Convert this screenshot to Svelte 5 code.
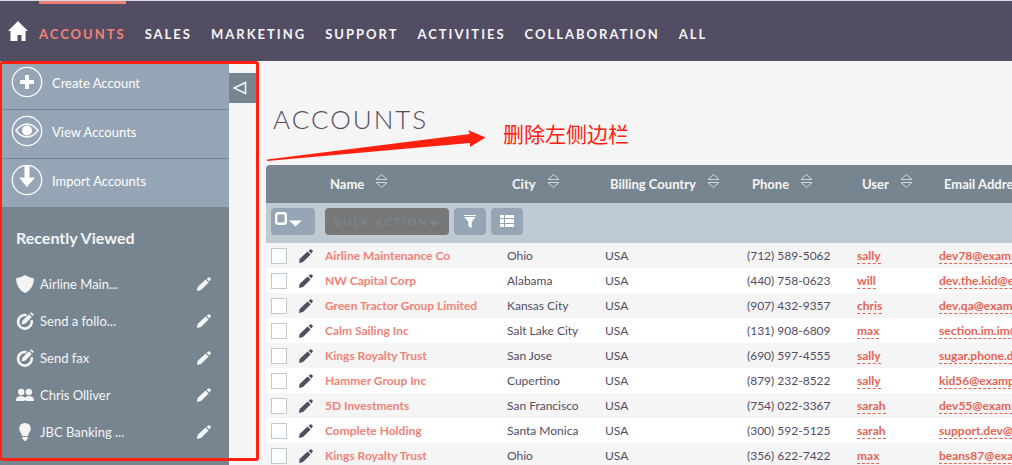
<script lang="ts">
	type Account = {
		name: string;
		city: string;
		phone: string;
		user: string;
		email: string;
	};

	const menu = ['Accounts', 'Sales', 'Marketing', 'Support', 'Activities', 'Collaboration', 'All'];

	const actions = [
		{ label: 'Create Account', icon: 'plus' },
		{ label: 'View Accounts', icon: 'eye' },
		{ label: 'Import Accounts', icon: 'down' }
	];

	const recent = [
		{ label: 'Airline Main...', icon: 'shield' },
		{ label: 'Send a follo...', icon: 'task' },
		{ label: 'Send fax', icon: 'task' },
		{ label: 'Chris Olliver', icon: 'people' },
		{ label: 'JBC Banking ...', icon: 'bulb' }
	];

	const columns = ['Name', 'City', 'Billing Country', 'Phone', 'User', 'Email Address'];

	const accounts: Account[] = [
		{ name: 'Airline Maintenance Co', city: 'Ohio', phone: '(712) 589-5062', user: 'sally', email: 'dev78@example.com' },
		{ name: 'NW Capital Corp', city: 'Alabama', phone: '(440) 758-0623', user: 'will', email: 'dev.the.kid@example.com' },
		{ name: 'Green Tractor Group Limited', city: 'Kansas City', phone: '(907) 432-9357', user: 'chris', email: 'dev.qa@example.com' },
		{ name: 'Calm Sailing Inc', city: 'Salt Lake City', phone: '(131) 908-6809', user: 'max', email: 'section.im.im@example.com' },
		{ name: 'Kings Royalty Trust', city: 'San Jose', phone: '(690) 597-4555', user: 'sally', email: 'sugar.phone.dev@example.com' },
		{ name: 'Hammer Group Inc', city: 'Cupertino', phone: '(879) 232-8522', user: 'sally', email: 'kid56@example.com' },
		{ name: '5D Investments', city: 'San Francisco', phone: '(754) 022-3367', user: 'sarah', email: 'dev55@example.com' },
		{ name: 'Complete Holding', city: 'Santa Monica', phone: '(300) 592-5125', user: 'sarah', email: 'support.dev@example.com' },
		{ name: 'Kings Royalty Trust', city: 'Ohio', phone: '(356) 622-7422', user: 'max', email: 'beans87@example.com' }
	];

	let selected = $state(accounts.map(() => false));
</script>

{#snippet pencil()}
	<svg class="pencil" viewBox="0 0 14 14" aria-hidden="true">
		<path d="M0 14l.6-4L8.600 2.400l3 3L4 13zM9.600 1.700L11.200.4q.7-.5 1.300 0l1.100 1.100q.5.6 0 1.300L12.300 4.400z" />
	</svg>
{/snippet}

<div class="page">
	<nav class="navbar">
		<a class="home" href="#home" aria-label="Home">
			<svg viewBox="0 0 20 20" width="20" height="20">
				<path d="M10 0l10 10h-2.500v10h-4v-6h-4v6h-7V10H0z" fill="#fff" />
			</svg>
		</a>
		{#each menu as item, i}
			<a class="menu-item" class:active={i === 0} href="#{item.toLowerCase()}">{item}</a>
		{/each}
	</nav>

	<div class="body">
		<aside class="sidebar">
			<ul class="actions">
				{#each actions as action}
					<li>
						<a href="#{action.icon}">
							<svg viewBox="0 0 32 32" width="32" height="32" aria-hidden="true">
								<circle cx="16" cy="16" r="14.700" fill="none" stroke="#fff" stroke-width="1.300" />
								{#if action.icon === 'plus'}
									<path d="M14 9h4v5h5v4h-5v5h-4v-5H9v-4h5z" fill="#fff" />
								{:else if action.icon === 'eye'}
									<path
										d="M5 15.500Q10 9 16 9t11 6.500Q22 22 16 22T5 15.500z"
										fill="none"
										stroke="#fff"
										stroke-width="1.500"
									/>
									<circle cx="16" cy="15.500" r="5" fill="#fff" />
								{:else}
									<path d="M13.500 1h5v12.500H24L16 23l-8-9.500h5.500z" fill="#fff" />
								{/if}
							</svg>
							<span>{action.label}</span>
						</a>
					</li>
				{/each}
			</ul>

			<h2>Recently Viewed</h2>
			<ul class="recent">
				{#each recent as item}
					<li>
						<svg class="kind" viewBox="0 0 18 18" aria-hidden="true">
							{#if item.icon === 'shield'}
								<path d="M9 0q4 2.500 9 3.500-.2 5-2.200 8.500-2.300 4-6.800 6-4.500-2-6.800-6Q.2 8.500 0 3.500 5 2.500 9 0z" />
							{:else if item.icon === 'task'}
								<path
									d="M10.500 3.200a6.800 6.800 0 1 0 5 5"
									fill="none"
									stroke="#f5f5f5"
									stroke-width="2.600"
								/>
								<path d="M5.500 12.500l1-4L13 2.200l2.800 2.800-6.300 6.500zM14 1.300L15.200.2 18 2.800 16.800 4z" />
							{:else if item.icon === 'people'}
								<circle cx="5.200" cy="6" r="3.200" />
								<circle cx="12.800" cy="6" r="3.200" />
								<path d="M0 15v-1.500Q.5 10 5.200 10q2.300 0 3.800 1.500Q10.500 10 12.800 10q4.700 0 5.200 3.500V15H9.500v-1h-1v1z" />
							{:else}
								<path d="M9 0q5.500.4 5.800 5.500-.1 2.500-1.800 4.500-.8 1.200-1 3H6q-.2-1.800-1-3-1.700-2-1.800-4.500Q3.500.4 9 0zM6.200 14h5.600v2H11q-.5 2-2 2t-2-2h-.8z" />
							{/if}
						</svg>
						<a href="#{item.icon}">{item.label}</a>
						<button class="edit" aria-label="Edit">{@render pencil()}</button>
					</li>
				{/each}
			</ul>
		</aside>

		<button class="toggle" aria-label="Toggle sidebar">
			<svg viewBox="0 0 14 14" width="14" height="14">
				<path d="M1 7l11.500-5.500v11z" fill="none" stroke="#f5f5f5" stroke-width="1.500" />
			</svg>
		</button>

		<main>
			<h1>Accounts</h1>
			<table>
				<colgroup>
					<col class="c-check" />
					<col class="c-edit" />
					<col class="c-name" />
					<col class="c-city" />
					<col class="c-country" />
					<col class="c-phone" />
					<col class="c-user" />
					<col class="c-email" />
				</colgroup>
				<thead>
					<tr class="head">
						<td colspan="2"></td>
						{#each columns as column, i}
							<th scope="col">
								<div class="label">
									{column}
									{#if i < 5}
										<svg class="sort" viewBox="0 0 13 14" aria-hidden="true">
											<path d="M1 5.500L6.500.5l5.500 5zM1 8.500l5.500 5 5.500-5z" />
										</svg>
									{/if}
								</div>
							</th>
						{/each}
					</tr>
					<tr class="tools">
						<td colspan="8">
							<div class="toolbar">
								<button class="tool select-all" aria-label="Select">
									<svg viewBox="0 0 28 20" width="28" height="20">
										<rect x="1.200" y="1.200" width="9.600" height="10.600" rx="2" fill="none" stroke="#fff" stroke-width="2.400" />
										<path d="M14 8.500h13l-6.500 6z" fill="#fff" />
									</svg>
								</button>
								<button class="tool bulk" disabled>
									Bulk Action
									<svg viewBox="0 0 11 10" width="11" height="10"><path d="M0 4h11L5.500 10z" /></svg>
								</button>
								<button class="tool" aria-label="Filter">
									<svg viewBox="0 0 12 14" width="12" height="14">
										<path d="M0 0h12v1H0zM.3 2h11.400L7.700 7v6L4.300 11V7z" fill="#fff" />
									</svg>
								</button>
								<button class="tool" aria-label="Columns">
									<svg viewBox="0 0 14 13" width="14" height="13">
										<path d="M0 0h4v3H0zM5 0h9v3H5zM0 4h4v4H0zM5 4h9v4H5zM0 9h4v3H0zM5 9h9v3H5z" fill="#fff" />
									</svg>
								</button>
							</div>
						</td>
					</tr>
				</thead>
				<tbody>
					{#each accounts as account, i}
						<tr>
							<td><input type="checkbox" aria-label={account.name} bind:checked={selected[i]} /></td>
							<td><button class="edit" aria-label="Edit">{@render pencil()}</button></td>
							<td><a class="name" href="#account">{account.name}</a></td>
							<td>{account.city}</td>
							<td>USA</td>
							<td>{account.phone}</td>
							<td><a class="dashed" href="#user">{account.user}</a></td>
							<td><a class="dashed" href="#email">{account.email}</a></td>
						</tr>
					{/each}
				</tbody>
			</table>
		</main>
	</div>

	<!-- review markup drawn over the page -->
	<div class="mark-box"></div>
	<svg class="mark-arrow" viewBox="0 0 220 34" aria-hidden="true">
		<path d="M0 29.500L203 4l-2-4 17.500 7.500L203 17v-4L0 31z" fill="#ff2010" />
	</svg>
	<p class="mark-text">删除左侧边栏</p>
</div>

<style>
	:global(body) {
		margin: 0;
	}

	.page {
		position: relative;
		height: 100vh;
		overflow: hidden;
		display: flex;
		flex-direction: column;
		background: #f5f5f5;
		color: #534d64;
		font-family: Lato, sans-serif;
		font-size: 13px;
	}

	a {
		color: inherit;
		text-decoration: none;
	}
	ul {
		list-style: none;
		margin: 0;
		padding: 0;
	}
	button {
		border: none;
		padding: 0;
		background: none;
		font: inherit;
		cursor: pointer;
	}
	svg {
		display: block;
	}

	.navbar {
		flex: none;
		display: flex;
		height: 60px;
		padding-left: 8px;
		border-top: 1px solid #d5dbe0;
		background: #534d64;
	}
	.home {
		padding-top: 20px;
		margin-right: 11px;
	}
	.menu-item {
		margin-right: 19px;
		border-top: 3px solid transparent;
		line-height: 60px;
		font-weight: 700;
		letter-spacing: 2px;
		text-transform: uppercase;
		color: #f5f5f5;
	}
	.menu-item.active {
		border-color: #f08377;
		color: #f08377;
	}

	.body {
		flex: 1;
		min-height: 0;
		display: flex;
		align-items: flex-start;
	}

	.sidebar {
		flex: none;
		align-self: stretch;
		width: 229px;
		background: #778591;
		color: #f5f5f5;
	}
	.actions li {
		border-bottom: 1px solid #778591;
		background: #95a5b5;
	}
	.actions a {
		display: flex;
		gap: 9px;
		height: 43px;
		padding: 5px 0 0 11px;
		line-height: 34px;
		color: #fff;
	}
	.sidebar h2 {
		margin: 20px 16px 17px;
		font-size: 16px;
		line-height: 20px;
		font-weight: 700;
	}
	.recent li {
		display: flex;
		align-items: center;
		gap: 6px;
		height: 37px;
		padding: 0 18px 0 16px;
	}
	.recent .edit {
		margin-left: auto;
		color: #f5f5f5;
	}
	.kind {
		width: 18px;
		height: 18px;
		fill: #f5f5f5;
	}
	.pencil {
		width: 14px;
		height: 14px;
		fill: currentColor;
	}

	.toggle {
		flex: none;
		display: flex;
		align-items: center;
		width: 28px;
		height: 30px;
		margin-top: 12px;
		padding-left: 4px;
		background: #778591;
	}

	main {
		flex: 1;
		min-width: 0;
		padding-left: 9px;
	}
	h1 {
		margin: 41px 0 29px 7px;
		font-size: 26px;
		line-height: 34px;
		font-weight: 300;
		letter-spacing: 2px;
		text-transform: uppercase;
	}

	table {
		width: 100%;
		min-width: 920px;
		table-layout: fixed;
		border-collapse: collapse;
	}
	.c-check {
		width: 28px;
	}
	.c-edit {
		width: 26px;
	}
	.c-name {
		width: 182px;
	}
	.c-city {
		width: 98px;
	}
	.c-country {
		width: 142px;
	}
	.c-phone {
		width: 110px;
	}
	.c-user {
		width: 82px;
	}

	td {
		height: 25px;
		padding: 0 0 0 5px;
		font-size: 12px;
		white-space: nowrap;
	}
	th,
	.head td {
		height: 38px;
		padding: 0 0 0 10px;
		background: #778591;
		color: #f5f5f5;
		text-align: left;
		white-space: nowrap;
	}
	.head td {
		border-top-left-radius: 4px;
	}
	.label {
		display: flex;
		gap: 11px;
		line-height: 20px;
	}
	.sort {
		width: 13px;
		height: 14px;
		fill: none;
		stroke: #d0d7dc;
	}
	.tools td {
		height: 40px;
		background: #bfcad3;
	}
	.toolbar {
		display: flex;
		gap: 5px;
		height: 30px;
	}
	.tool {
		display: flex;
		align-items: center;
		justify-content: center;
		width: 32px;
		height: 27px;
		border-radius: 4px;
		background: #95a5b5;
	}
	.select-all {
		width: 44px;
		margin-right: 5px;
		padding: 0 8px 0 0;
	}
	.bulk {
		width: 124px;
		background: #777;
		color: #778591;
		font-size: 11px;
		font-weight: 700;
		letter-spacing: 2px;
		text-transform: uppercase;
	}
	.bulk svg {
		fill: #778591;
	}

	tbody tr:nth-child(even) {
		background: #fff;
	}
	input {
		appearance: none;
		display: block;
		box-sizing: border-box;
		width: 16px;
		height: 16px;
		margin: 0;
		border: 1px solid #bfcad3;
		background: #fff;
	}
	input:checked {
		background: #534d64;
	}
	tbody .edit {
		display: block;
		color: #534d64;
	}
	.name {
		font-weight: 700;
		color: #f08377;
	}
	.dashed {
		border-bottom: 1px dashed #e56455;
		font-weight: 700;
		color: #e56455;
	}

	.mark-box {
		position: absolute;
		top: 61px;
		left: 0;
		box-sizing: border-box;
		width: 259px;
		height: 400px;
		border: 3px solid #ff2010;
		border-left-width: 2px;
		border-radius: 3px;
		pointer-events: none;
	}
	.mark-arrow {
		position: absolute;
		top: 130px;
		left: 267px;
		width: 220px;
		height: 34px;
		pointer-events: none;
	}
	.mark-text {
		position: absolute;
		top: 118px;
		left: 503px;
		margin: 0;
		font-family: 'Noto Sans CJK SC', sans-serif;
		font-size: 21px;
		line-height: 30px;
		color: #ff2010;
	}
</style>
